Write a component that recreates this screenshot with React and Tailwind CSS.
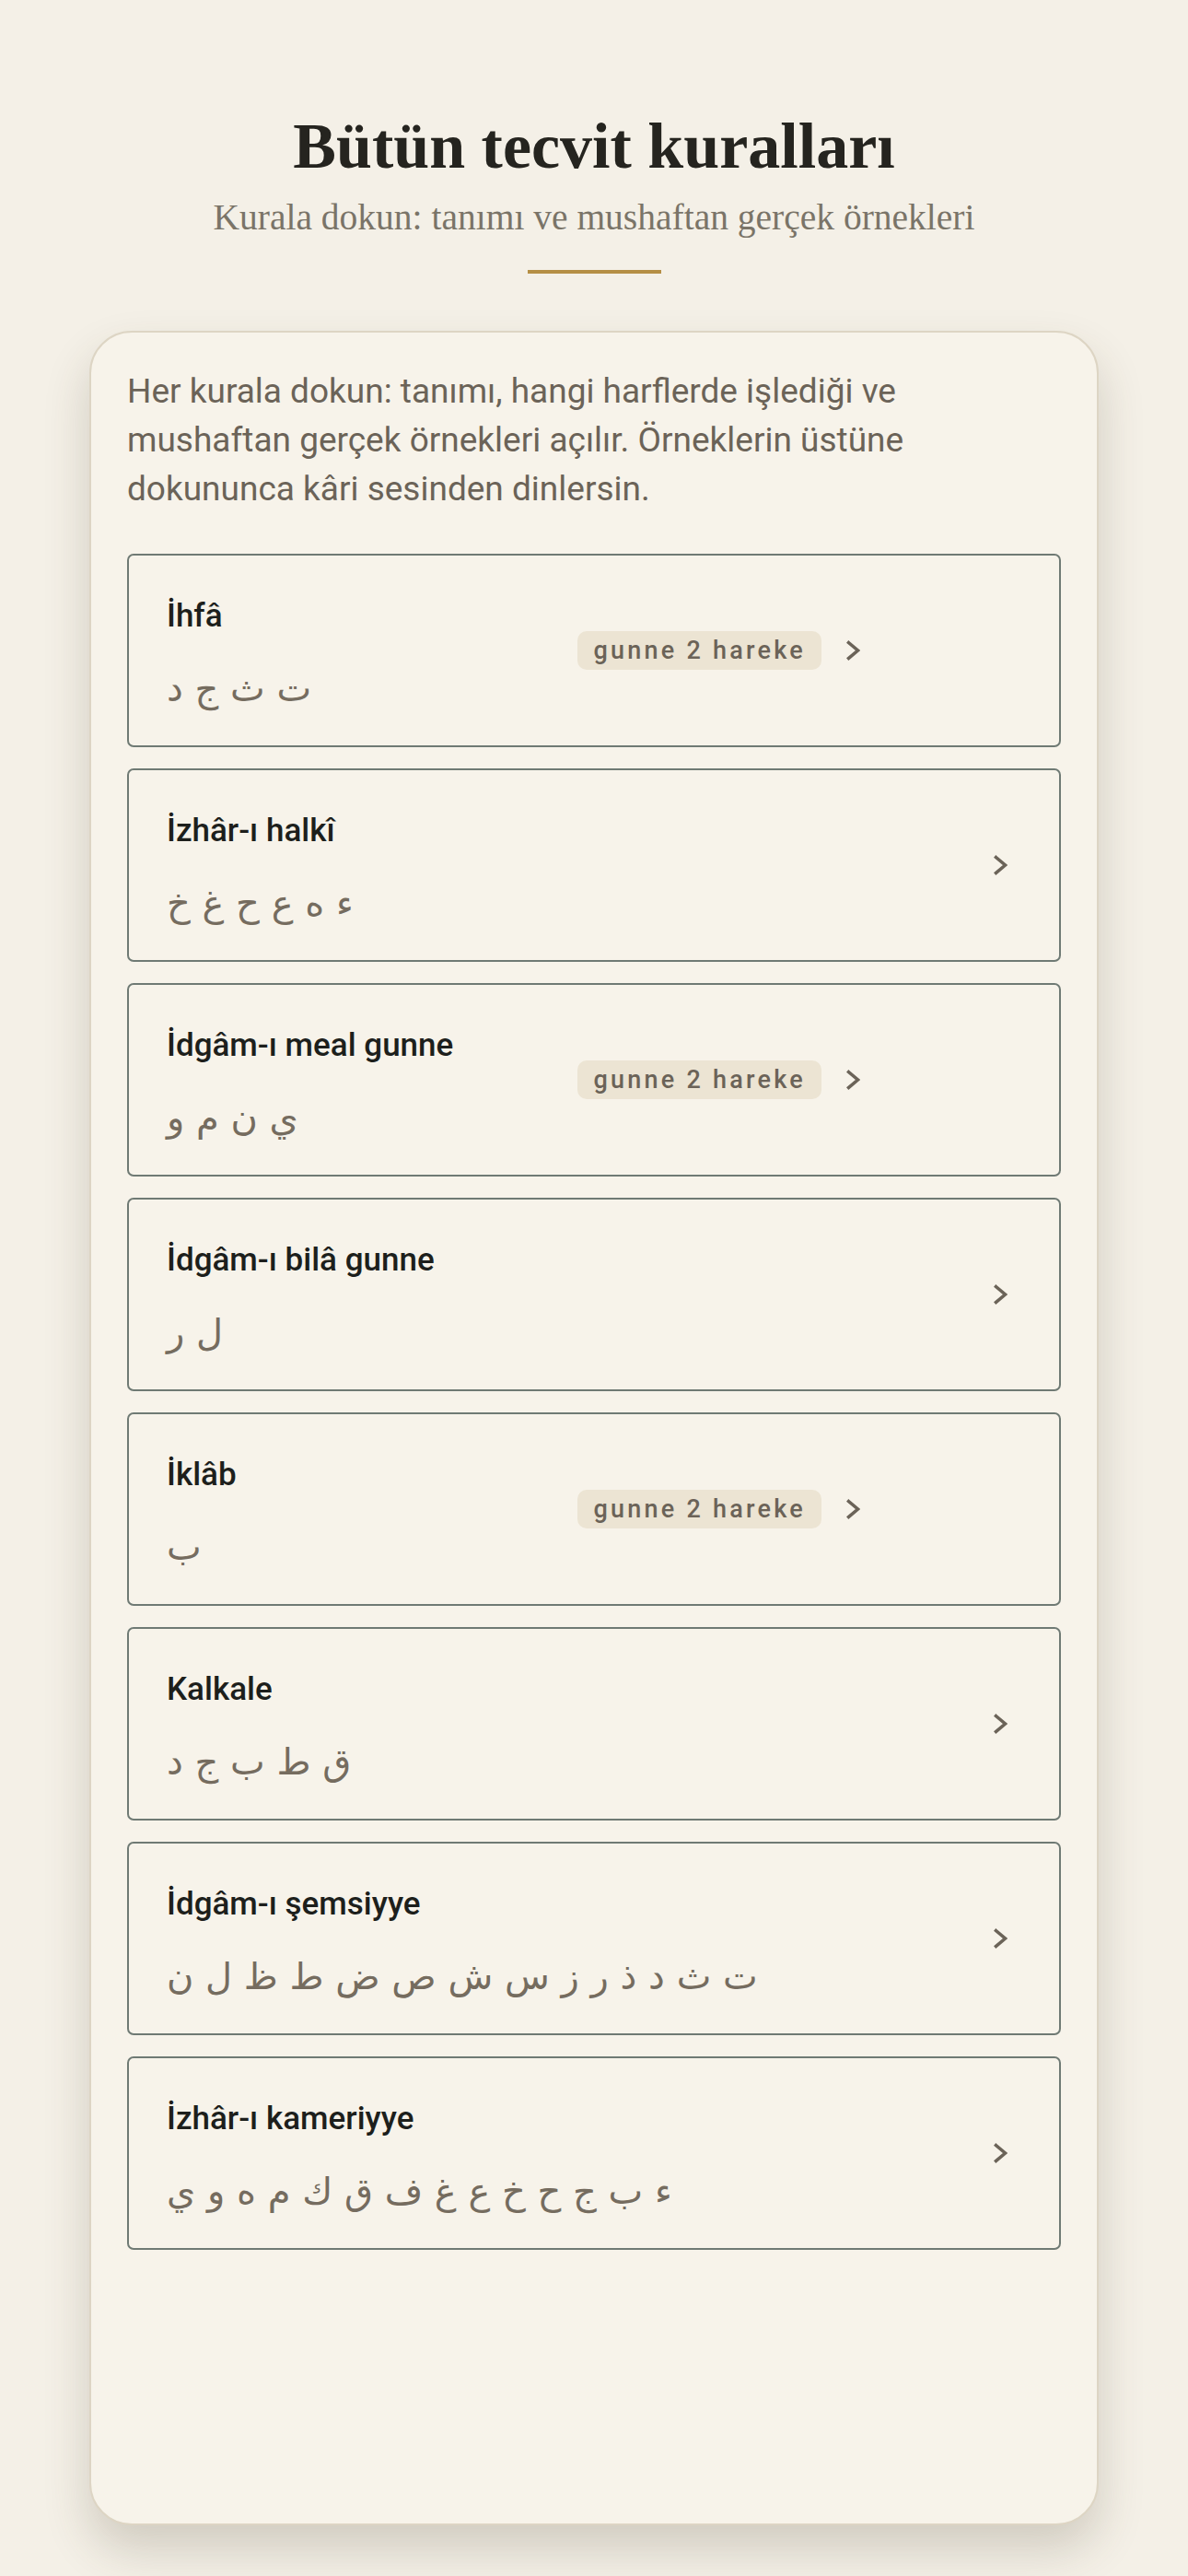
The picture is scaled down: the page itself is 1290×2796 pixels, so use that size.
import React from "react";

const rules = [
  { name: "İhfâ", letters: "ت ث ج د", badge: "gunne 2 hareke" },
  { name: "İzhâr-ı halkî", letters: "ء ه ع ح غ خ" },
  { name: "İdgâm-ı meal gunne", letters: "ي ن م و", badge: "gunne 2 hareke" },
  { name: "İdgâm-ı bilâ gunne", letters: "ل ر" },
  { name: "İklâb", letters: "ب", badge: "gunne 2 hareke" },
  { name: "Kalkale", letters: "ق ط ب ج د" },
  { name: "İdgâm-ı şemsiyye", letters: "ت ث د ذ ر ز س ش ص ض ط ظ ل ن" },
  { name: "İzhâr-ı kameriyye", letters: "ء ب ج ح خ ع غ ف ق ك م ه و ي" },
];

const Chevron = () => (
  <svg width="15" height="22" viewBox="0 0 15 22" fill="none" className="shrink-0">
    <path d="M2.5 2.5 L12.5 11 L2.5 19.5" stroke="#6b6358" strokeWidth="3.5" strokeLinecap="square" />
  </svg>
);

const RuleRow = ({ rule }) => (
  <button className="flex h-[210px] w-full items-center rounded-[7px] border-2 border-[#6f7a74] pl-[41px] pr-[56px] text-left">
    <div className="flex flex-1 flex-col self-start pt-[44px]">
      <span className="text-[35px] leading-[44px] font-medium text-[#1d1f1c]">{rule.name}</span>
      <span className="mt-[25px] font-['DejaVu_Sans',sans-serif] text-[40px] leading-[62px] text-[#756c5f]">
        {rule.letters}
      </span>
    </div>
    {rule.badge ? (
      <div className="mr-[160px] flex items-center gap-[27px]">
        <span className="flex h-[42px] items-center rounded-[10px] bg-[#ece4d3] px-[17px] text-[27px] font-medium tracking-[0.12em] text-[#6b6358]">
          {rule.badge}
        </span>
        <Chevron />
      </div>
    ) : (
      <Chevron />
    )}
  </button>
);

export default function App() {
  return (
    <div className="min-h-[2796px] bg-[#f4f0e7] pt-[124px] font-['Roboto',sans-serif]">
      {/* Header */}
      <header className="flex flex-col items-center">
        <h1 className="font-['Liberation_Serif',serif] text-[70px] leading-[70px] font-bold text-[#25241f]">
          Bütün tecvit kuralları
        </h1>
        <p className="mt-[22px] font-['Liberation_Serif',serif] text-[39.5px] leading-[40px] text-[#7a7468]">
          Kurala dokun: tanımı ve mushaftan gerçek örnekleri
        </p>
        <div className="mt-[37px] h-[4px] w-[145px] bg-[#b58f45]" />
      </header>

      {/* Card */}
      <main className="mx-auto mt-[62px] w-[1096px] rounded-[46px] border-2 border-[#ddd5c4] bg-[#f7f3ea] px-[39px] pt-[37px] pb-[297px] shadow-[0_26px_50px_rgba(70,60,40,0.2)]">
        <p className="max-w-[930px] text-[37px] leading-[53px] text-[#6b6358]">
          Her kurala dokun: tanımı, hangi harflerde işlediği ve mushaftan gerçek örnekleri açılır. Örneklerin üstüne dokununca kâri sesinden dinlersin.
        </p>

        <div className="mt-[44px] flex flex-col gap-[23px]">
          {rules.map((r) => (
            <RuleRow key={r.name} rule={r} />
          ))}
        </div>
      </main>
    </div>
  );
}
